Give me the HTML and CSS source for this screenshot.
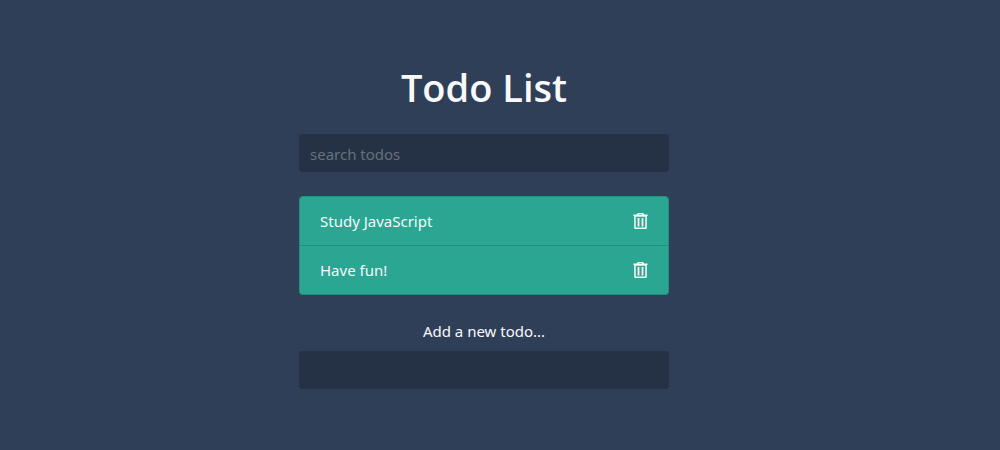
FILE: index.html
```html
<!DOCTYPE html>
<html lang="en">
<head>
<meta charset="utf-8">
<meta name="viewport" content="width=device-width, initial-scale=1">
<title>Todo List</title>
<link rel="stylesheet" href="styles.css">
</head>
<body>
<main class="container">
  <header class="header">
    <h1 class="title">Todo List</h1>
    <form class="search">
      <input class="field" type="text" name="search" placeholder="search todos" aria-label="Search todos">
    </form>
  </header>
  <ul class="todos">
    <li class="todo">
      <span>Study JavaScript</span>
      <button class="delete" type="button" aria-label="Delete Study JavaScript">
        <svg class="icon" viewBox="0 0 16 16" aria-hidden="true"><path fill-rule="evenodd" d="M6 0H11L12.3 1.6H15.6V3.1H14.8V15Q14.8 16 13.8 16H3.2Q2.2 16 2.2 15V3.1H1.4V1.6H4.7ZM3.7 3.7V14.5H13.3V3.7ZM6.8 1.1L6.5 1.6H10.5L10.2 1.1Z"/><path d="M5.6 5H7.4V13.5H5.6ZM9.6 5H11.4V13.5H9.6Z"/></svg>
      </button>
    </li>
    <li class="todo">
      <span>Have fun!</span>
      <button class="delete" type="button" aria-label="Delete Have fun!">
        <svg class="icon" viewBox="0 0 16 16" aria-hidden="true"><path fill-rule="evenodd" d="M6 0H11L12.3 1.6H15.6V3.1H14.8V15Q14.8 16 13.8 16H3.2Q2.2 16 2.2 15V3.1H1.4V1.6H4.7ZM3.7 3.7V14.5H13.3V3.7ZM6.8 1.1L6.5 1.6H10.5L10.2 1.1Z"/><path d="M5.6 5H7.4V13.5H5.6ZM9.6 5H11.4V13.5H9.6Z"/></svg>
      </button>
    </li>
  </ul>
  <form class="add">
    <label class="label" for="add">Add a new todo...</label>
    <input class="field" type="text" id="add" name="add">
  </form>
</main>
</body>
</html>
```
FILE: styles.css
```css
* { box-sizing: border-box; }
body {
  margin: 0;
  padding-right: 32px;
  background: #2f3f58;
  color: #f8f9fa;
  font-family: "Noto Sans", "Open Sans", sans-serif;
  font-size: 15px;
  line-height: 24px;
}
.container {
  max-width: 400px;
  margin: 0 auto;
  padding: 63px 15px;
}
.title {
  margin: 0 0 23px;
  font-family: "Open Sans", sans-serif;
  font-size: 38px;
  line-height: 48px;
  font-weight: 600;
  text-align: center;
}
.field {
  display: block;
  width: 100%;
  height: 38px;
  padding: 7px 11px 5px;
  border: 0;
  border-radius: 4px;
  background: #253145;
  color: #fff;
  font: inherit;
}
.field::placeholder { color: #66717b; opacity: 1; }
.todos { list-style: none; margin: 24px 0; padding: 0; }
.todo {
  display: flex;
  align-items: center;
  justify-content: space-between;
  padding: 12px 20px;
  border: 1px solid #23907f;
  background: #2aa693;
}
.todo:first-child { border-radius: 4px 4px 0 0; }
.todo:last-child { border-radius: 0 0 4px 4px; }
.todo + .todo { border-top: 0; }
.delete {
  display: flex;
  padding: 0;
  border: 0;
  background: none;
  color: inherit;
  cursor: pointer;
}
.icon { width: 16px; height: 16px; fill: currentColor; }
.label { display: block; margin-bottom: 8px; text-align: center; }
```
